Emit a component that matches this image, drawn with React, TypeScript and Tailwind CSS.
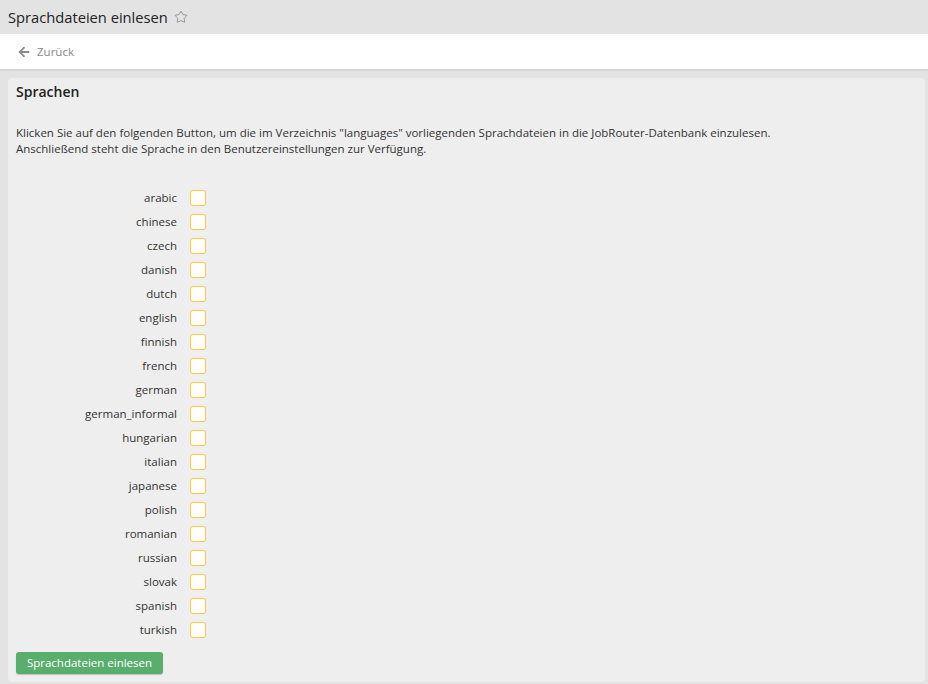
import { FaArrowLeft } from 'react-icons/fa';
import { Star } from 'lucide-react';

const languages = [
  'arabic',
  'chinese',
  'czech',
  'danish',
  'dutch',
  'english',
  'finnish',
  'french',
  'german',
  'german_informal',
  'hungarian',
  'italian',
  'japanese',
  'polish',
  'romanian',
  'russian',
  'slovak',
  'spanish',
  'turkish',
];

export default function App() {
  return (
    <div
      className="min-h-[684px] bg-[#e3e3e3] text-[#333]"
      style={{ fontFamily: '"Open Sans", "Liberation Sans", sans-serif' }}
    >
      <div className="flex h-[34px] items-center gap-[6px] px-[8px]">
        <h1 className="text-[14.7px] font-normal text-[#222]">Sprachdateien einlesen</h1>
        <Star size={14} strokeWidth={1.5} className="text-[#8a8a8a]" />
      </div>

      <div className="flex h-[37px] items-center gap-[7px] border-b-2 border-[#d6d6d6] bg-white pl-[18px]">
        <FaArrowLeft size={12} className="text-[#8a8a8a]" />
        <span className="text-[11.5px] text-[#8a8a8a]">Zurück</span>
      </div>

      <div className="pl-[8px] pr-[3px] pt-[7px] pb-[2px]">
        <div className="rounded-[4px] bg-[#eeeeee] px-[8px] pb-[8px]">
          <h2 className="text-[14px] leading-[28px] font-semibold text-[#222]">Sprachen</h2>

          <p className="mt-[19px] text-[11.5px] leading-[16px] text-[#333]">
            Klicken Sie auf den folgenden Button, um die im Verzeichnis "languages" vorliegenden
            Sprachdateien in die JobRouter-Datenbank einzulesen.
            <br />
            Anschließend steht die Sprache in den Benutzereinstellungen zur Verfügung.
          </p>

          <div className="mt-[29px] flex flex-col">
            {languages.map((lang) => (
              <label key={lang} className="flex h-[24px] items-center gap-[13px]">
                <span className="w-[161px] text-right text-[11.5px] text-[#333]">{lang}</span>
                <span className="h-[16px] w-[16px] rounded-[3px] border-[1.5px] border-[#ffc83d] bg-white" />
              </label>
            ))}
          </div>

          <button
            type="button"
            className="mt-[10px] h-[22px] w-[147px] rounded-[3px] bg-[#59ad6d] text-[11.5px] text-white shadow-[0_1px_1px_rgba(0,0,0,0.2)]"
          >
            Sprachdateien einlesen
          </button>
        </div>
      </div>
    </div>
  );
}
